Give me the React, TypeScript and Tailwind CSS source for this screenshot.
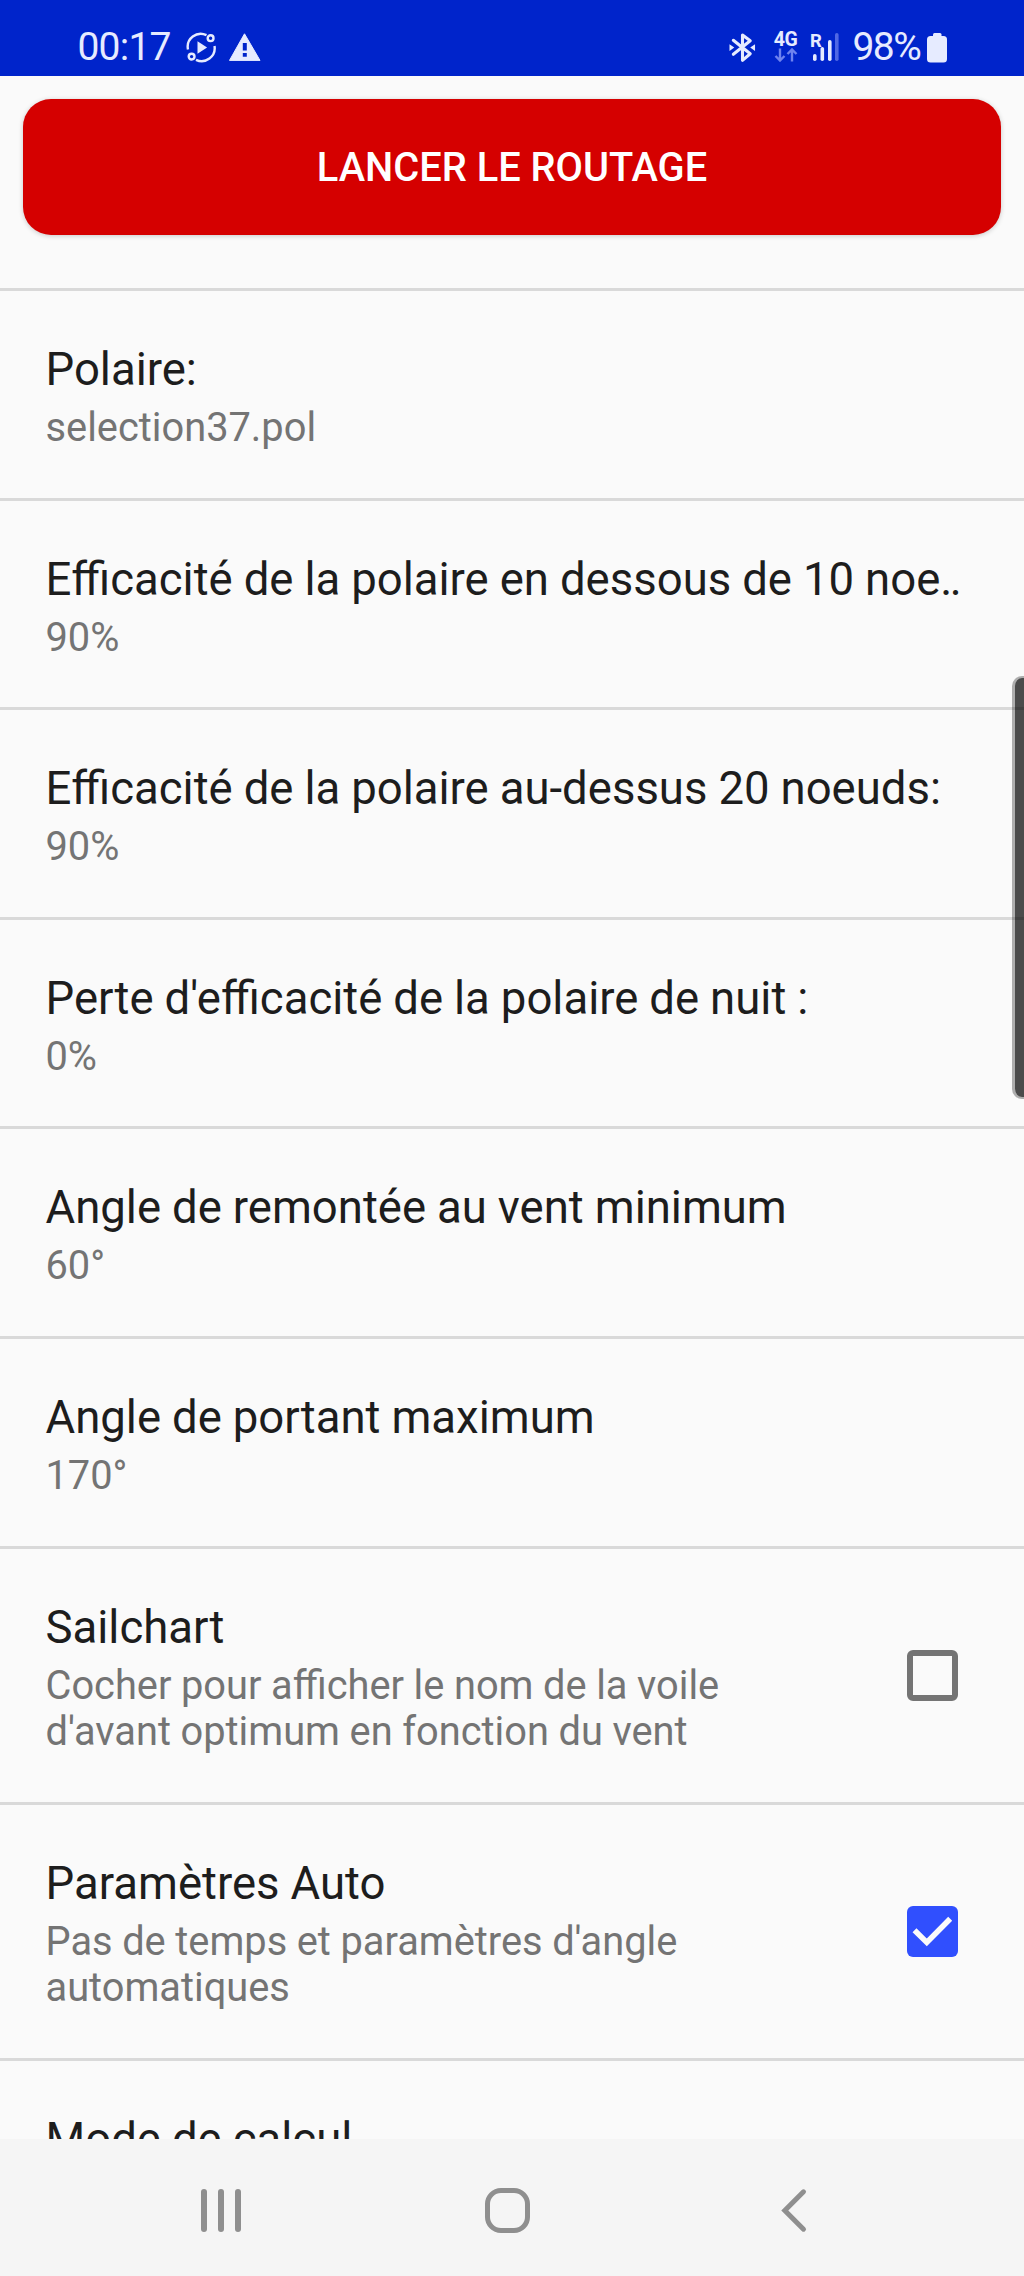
type Preference = {
  title: string;
  summary?: string[];
  checked?: boolean;
  truncated?: boolean;
};

const preferences: Preference[] = [
  { title: 'Polaire:', summary: ['selection37.pol'] },
  { title: 'Efficacité de la polaire en dessous de 10 noe', summary: ['90%'], truncated: true },
  { title: 'Efficacité de la polaire au-dessus 20 noeuds:', summary: ['90%'] },
  { title: "Perte d'efficacité de la polaire de nuit :", summary: ['0%'] },
  { title: 'Angle de remontée au vent minimum', summary: ['60°'] },
  { title: 'Angle de portant maximum', summary: ['170°'] },
  {
    title: 'Sailchart',
    summary: ['Cocher pour afficher le nom de la voile', "d'avant optimum en fonction du vent"],
    checked: false,
  },
  {
    title: 'Paramètres Auto',
    summary: ["Pas de temps et paramètres d'angle", 'automatiques'],
    checked: true,
  },
  { title: 'Mode de calcul' },
];

function StatusBar() {
  return (
    <header className="flex h-[76px] shrink-0 items-start justify-between bg-[#0024cb] pt-[24px] pl-[77.5px] pr-[77.5px] text-[#e6ebff]">
      <div className="flex items-start">
        <span className="w-[108.5px] text-[39px] leading-[46px] tracking-[-0.8px]">00:17</span>
        {/* Routine running */}
        <svg className="mt-[8px] h-[31px] w-[31px]" viewBox="0 0 31 31" fill="none" stroke="currentColor" strokeWidth="2.4">
          <path d="M2 17.5A13 13 0 0 1 20.5 3.2" />
          <path d="M28.5 14A13 13 0 0 1 10 27.8" />
          <circle cx="24.6" cy="6.2" r="2.9" />
          <circle cx="5.6" cy="24.6" r="2.9" />
          <path d="M11.5 9.2v12.6l9.6-6.3z" fill="currentColor" stroke="none" />
        </svg>
        <svg className="ml-[12px] mt-[9px] h-[28px] w-[32px]" viewBox="0 0 32 28">
          <path d="M15.5.8 31 27.4H.5z" fill="currentColor" stroke="currentColor" strokeLinejoin="round" />
          <path d="M13.8 10h4v7.5h-4zM13.8 20h4v3.8h-4z" fill="#0024cb" />
        </svg>
      </div>

      <div className="flex items-start">
        <svg className="mt-[8px] h-[31px] w-[27px]" viewBox="0 0 28 32" fill="none" stroke="currentColor" strokeWidth="3.2">
          <path d="M4.5 8.5 22 22.5l-8 6.8V3L22 9 4.5 23" strokeLinejoin="round" strokeLinecap="round" />
          <path d="m.5 12.5 5 3.5-5 3.5zM27 12.5 22 16l5 3.5z" fill="currentColor" stroke="none" />
        </svg>
        <div className="ml-[17px] mt-[7px] flex w-[25px] flex-col items-center">
          <span className="text-[19.5px] leading-[17px] font-bold tracking-[-0.5px]">4G</span>
          <svg className="h-[14px] w-[24px]" viewBox="0 0 24 14" fill="none" stroke="#6f83ef" strokeWidth="2.4">
            <path d="M6 .5v12M1.5 8 6 12.5 10.5 8M18 13.5v-12M13.5 6 18 1.5 22.5 6" />
          </svg>
        </div>
        <div className="relative ml-[12px] mt-[8px] h-[30px] w-[30px]">
          <span className="absolute -top-[2px] left-0 text-[18.5px] leading-[22px] font-bold">R</span>
          <svg className="h-full w-full" viewBox="0 0 30 30" fill="currentColor">
            <rect x="3" y="22" width="3.6" height="7" rx="1.8" />
            <rect x="10.5" y="15" width="3.6" height="14" rx="1.8" />
            <rect x="18" y="8" width="3.6" height="21" rx="1.8" />
            <rect x="25" y="1" width="3.6" height="28" rx="1.8" fill="#5068e4" />
          </svg>
        </div>
        <span className="ml-[12.5px] w-[74px] text-[39px] leading-[46px] tracking-[-1.6px]">98%</span>
        <svg className="mt-[8px] h-[31px] w-[20px]" viewBox="0 0 20 31" fill="currentColor">
          <rect x="6" y="1" width="8.5" height="7" rx="1.5" />
          <rect x="0" y="4" width="20" height="26.5" rx="3.5" />
        </svg>
      </div>
    </header>
  );
}

function Checkbox({ checked }: { checked: boolean }) {
  if (!checked) {
    return <div className="h-[51px] w-[51px] rounded-[6px] border-[6px] border-[#747474]" />;
  }
  return (
    <div className="h-[51px] w-[51px] rounded-[6px] bg-[#304ffe]">
      <svg className="h-full w-full" viewBox="0 0 51 51" fill="none" stroke="#fafafa" strokeWidth="5.6">
        <path d="m7.5 24.3 12.3 12.1L43.2 12.8" />
      </svg>
    </div>
  );
}

function PreferenceRow({ title, summary, checked, truncated }: Preference) {
  const hasWidget = checked !== undefined;
  return (
    <div
      className={`flex shrink-0 items-center justify-between border-t-[3px] border-[#d9d9d9] pl-[45.5px] pr-[66px] ${
        hasWidget ? 'h-[256px]' : 'h-[209.6px]'
      }`}
    >
      <div className="self-start whitespace-nowrap pt-[52px] [word-spacing:-0.3px]">
        <div className="text-[45.5px] leading-[53px] text-[#1d1d1d]">
          {title}
          {truncated && <span className="tracking-[-2.5px]">..</span>}
        </div>
        <div className="mt-[9px] text-[39.8px] leading-[46.6px] text-[#747474]">
          {summary?.map(line => <div key={line}>{line}</div>)}
        </div>
      </div>
      {hasWidget && <Checkbox checked={checked} />}
    </div>
  );
}

function NavigationBar() {
  return (
    <nav className="flex h-[137px] shrink-0 items-start bg-[#f5f5f5] pl-[201px] pt-[49px] text-[#8f8f8f]">
      <div className="mt-px flex gap-[11px]">
        <div className="h-[43px] w-[6px] rounded-full bg-current" />
        <div className="h-[43px] w-[6px] rounded-full bg-current" />
        <div className="h-[43px] w-[6px] rounded-full bg-current" />
      </div>
      <div className="ml-[244px] h-[45px] w-[45px] rounded-[16px] border-[5.5px] border-current" />
      <svg className="ml-[250px] h-[45px] w-[28px]" viewBox="0 0 28 45" fill="none" stroke="currentColor" strokeWidth="5">
        <path d="M23.5 3.8 4.8 22.5l18.7 18.7" strokeLinecap="round" />
      </svg>
    </nav>
  );
}

export default function App() {
  return (
    <div className="relative flex h-[2276px] w-[1024px] flex-col overflow-hidden bg-[#fafafa] font-[Roboto,sans-serif]">
      <StatusBar />
      <main className="flex min-h-0 flex-1 flex-col overflow-hidden">
        <button className="mx-[23px] mt-[23px] h-[135.5px] shrink-0 rounded-[28px] bg-[#d50000] pt-[3px] text-[39.8px] font-medium text-white shadow-[0_1px_5px_rgba(0,0,0,0.2)]">
          LANCER LE ROUTAGE
        </button>
        <div className="mt-[53.5px] flex flex-col">
          {preferences.map(p => <PreferenceRow key={p.title} {...p} />)}
        </div>
      </main>
      <NavigationBar />

      {/* Edge panel handle */}
      <div className="absolute top-[676px] right-0 h-[423px] w-[12px] rounded-l-[10px] border-y-2 border-l-[3px] border-black/30 bg-black/70 bg-clip-padding" />
    </div>
  );
}
